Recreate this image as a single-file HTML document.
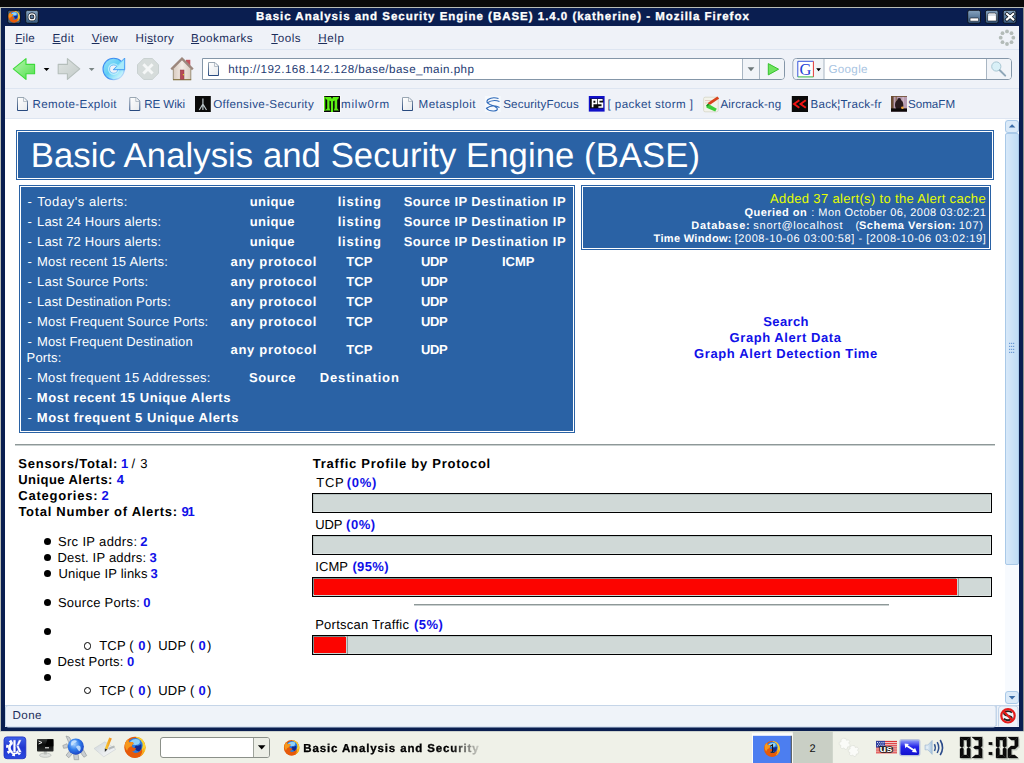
<!DOCTYPE html>
<html>
<head>
<meta charset="utf-8">
<title>Basic Analysis and Security Engine (BASE) 1.4.0 (katherine) - Mozilla Firefox</title>
<style>
*{box-sizing:border-box;margin:0;padding:0}
html,body{width:1024px;height:763px;overflow:hidden;background:#0a0a0a;font-family:"Liberation Sans",sans-serif}
.a{position:absolute;white-space:pre;text-rendering:geometricPrecision}
svg{position:absolute;overflow:visible}
u{text-decoration:underline;text-underline-offset:1px}
#win{left:0;top:7px;width:1024px;height:724px;background:#0a1e50;border-left:1px solid #b9bdb6;border-top:1px solid #b9bdb6;border-right:1px solid #8f948f}
#menubar{left:5px;top:26px;width:1014px;height:24px;background:#eff2f8;border-bottom:1px solid #dde5f1}
#toolbar{left:5px;top:50px;width:1014px;height:39px;background:#eff2f8;border-bottom:1px solid #dde5f1}
#bmbar{left:5px;top:89px;width:1014px;height:30px;background:#eff2f8;border-bottom:1px solid #dde5f1}
#content{left:5px;top:119px;width:1000px;height:586px;background:#fff}
#sbar{left:1005px;top:119px;width:14px;height:586px;background:#f7fafe}
#status{left:5px;top:705px;width:1014px;height:22px;background:#eef2f9;border-top:1px solid #c3d5ea}
#task{left:0;top:731px;width:1024px;height:32px;background:#eff1e8;border-top:1px solid #cdd3cf}
.box{border:1px solid #2a62a5;padding:1px;background:#fff}
.box>i{display:block;width:100%;height:100%;background:#2a62a5}
.hr{height:2px;background:#8e9898;border-bottom:1px solid #c9d0d0}
.bar{left:312px;width:680px;height:20px;background:#d0d9d7;border:1px solid #000;box-shadow:inset 1px 1px 0 #b4c0be,inset -1px -1px 0 #dde4e3}
.bar>i{position:absolute;left:1px;top:1px;height:16px;background:#fc0400;box-shadow:-1px -1px 0 #7b8c8a,1px 1px 0 #c9d2d0}
.bar>b{position:absolute;top:0;width:1px;height:18px;background:#8d9a98}
.dot{width:7px;height:7px;border-radius:50%;background:#000;left:43.9px}
.circ{width:7.4px;height:7.4px;border-radius:50%;border:1.1px solid #000;left:83.8px}
.fade{-webkit-mask-image:linear-gradient(90deg,#000 0,#000 148px,rgba(0,0,0,0.08) 178px);mask-image:linear-gradient(90deg,#000 0,#000 148px,rgba(0,0,0,0.08) 178px)}
</style>
</head>
<body>
<div id="win" class="a"></div>
<div id="menubar" class="a"></div>
<div id="toolbar" class="a"></div>
<div id="bmbar" class="a"></div>
<div id="content" class="a"></div>
<div id="sbar" class="a"></div>
<div id="status" class="a"></div>
<div id="task" class="a"></div>
<div class="a box" style="left:16px;top:130px;width:978px;height:50px"><i></i></div>
<div class="a box" style="left:19px;top:185px;width:556px;height:248px"><i></i></div>
<div class="a box" style="left:581px;top:185px;width:410px;height:65px"><i></i></div>
<div class="a hr" style="left:15px;top:444px;width:980px"></div>
<div class="a hr" style="left:414px;top:604px;width:475px"></div>
<div class="a bar" style="top:493px"></div>
<div class="a bar" style="top:535px"></div>
<div class="a bar" style="top:577px"><i style="width:643px"></i><b style="left:645px"></b></div>
<div class="a bar" style="top:635px"><i style="width:32px"></i><b style="left:34px"></b></div>
<div class="a dot" style="top:538.25px"></div>
<div class="a dot" style="top:554.00px"></div>
<div class="a dot" style="top:569.75px"></div>
<div class="a dot" style="top:599.00px"></div>
<div class="a dot" style="top:628.25px"></div>
<div class="a dot" style="top:657.90px"></div>
<div class="a dot" style="top:673.70px"></div>
<div class="a circ" style="top:642.20px"></div>
<div class="a circ" style="top:686.70px"></div>

<svg width="1024" height="763" viewBox="0 0 1024 763" style="left:0;top:0">
<defs>
<linearGradient id="gbtn" x1="0" y1="0" x2="0" y2="1"><stop offset="0" stop-color="#86a3bf"/><stop offset="1" stop-color="#36587c"/></linearGradient>
<linearGradient id="gback" x1="0" y1="0" x2="1" y2="1"><stop offset="0" stop-color="#b9f5b0"/><stop offset="1" stop-color="#4fe04c"/></linearGradient>
<linearGradient id="gfwd" x1="0" y1="0" x2="1" y2="1"><stop offset="0" stop-color="#dfe4e2"/><stop offset="1" stop-color="#c3cbc9"/></linearGradient>
<linearGradient id="gpg" x1="0" y1="0" x2="0" y2="1"><stop offset="0" stop-color="#9aa7b3"/><stop offset="1" stop-color="#27497f"/></linearGradient>
<linearGradient id="gpgf" x1="0" y1="0" x2="1" y2="1"><stop offset="0" stop-color="#ffffff"/><stop offset="1" stop-color="#e6e9ec"/></linearGradient>
<linearGradient id="gthumb" x1="0" y1="0" x2="1" y2="0"><stop offset="0" stop-color="#d9e9f9"/><stop offset="1" stop-color="#bfdcf5"/></linearGradient>
<radialGradient id="grel" cx="0.5" cy="0.5" r="0.5"><stop offset="0.35" stop-color="#d8f4fd"/><stop offset="0.8" stop-color="#6fd0f7"/><stop offset="1" stop-color="#3a9df2"/></radialGradient>
<linearGradient id="ghome" x1="0" y1="0" x2="1" y2="0"><stop offset="0" stop-color="#d9cbc0"/><stop offset="0.5" stop-color="#f3ece6"/><stop offset="1" stop-color="#d9cbc0"/></linearGradient>
<linearGradient id="grel2" gradientUnits="userSpaceOnUse" x1="106" y1="60" x2="123" y2="78"><stop offset="0" stop-color="#8fdff8"/><stop offset="0.45" stop-color="#5fcdf5"/><stop offset="0.8" stop-color="#b5eefb"/><stop offset="1" stop-color="#e6f8fd"/></linearGradient>
<linearGradient id="grel3" gradientUnits="userSpaceOnUse" x1="106" y1="60" x2="123" y2="78"><stop offset="0" stop-color="#3f8ff2"/><stop offset="0.6" stop-color="#3f8ff2"/><stop offset="1" stop-color="#d5effb"/></linearGradient>
<g id="pgicon"><path d="M0.5,0.5 H7 L10.5,4 V13.5 H0.5 Z" fill="url(#gpgf)" stroke="url(#gpg)" stroke-width="1"/><path d="M6.5,1 V4.5 H10" fill="none" stroke="#a9b4be" stroke-width="0.8"/></g>
<g id="ffx"><circle cx="8" cy="8" r="7.9" fill="#e55b0a"/><path d="M8.4,0.15 A7.85,7.85 0 0 1 12.6,14.4 Q14.2,10.4 12.8,6.4 Q11.6,2.6 8.4,0.15z" fill="#fbd12e"/><circle cx="8.2" cy="6.6" r="5.6" fill="#2d7ee0"/><path d="M4.6,3.4 Q7.6,0.9 11.2,2.4 Q12.4,4.4 10.8,5.8 Q8,6.8 5.6,5.6 Q4.2,4.8 4.6,3.4z" fill="#8fd2f8"/><path d="M8.8,6.6 Q11.2,7.2 12.6,5.6 Q13.8,9 11,11.2 Q8.8,10.6 7.8,9 Q7.6,7.4 8.8,6.6z" fill="#132a90"/><path d="M0.7,5 Q1.4,2.8 3.2,2 Q3,3.6 3.9,4.4 Q5.8,3.6 7.2,5 Q5.8,5.6 5.6,7.2 Q6.6,9 8.8,8.4 Q8.4,11 5.8,11.2 Q8.6,13.4 12.4,11.6 Q14,10.6 14.9,8.6 Q15.4,12.6 11.6,15 Q7.2,17 3.4,14.2 Q-0.4,10.6 0.7,5z" fill="#e65a0a"/><path d="M14.9,8.6 Q15.4,12.6 11.6,15 Q13.8,12.4 13.4,10.2 Q14.4,9.6 14.9,8.6z" fill="#f7b322"/><path d="M0.7,5 Q1.4,2.8 3.2,2 Q3,3.6 3.9,4.4 Q5.8,3.6 7.2,5 Q5.8,5.6 5.6,7.2 Q2.8,7.8 2.2,10.6 Q0.2,8.4 0.7,5z" fill="#f6981c"/></g>
</defs>
<!-- titlebar icons -->
<rect x="7.7" y="10.3" width="12.6" height="13" rx="1.8" fill="#44617f" stroke="#0a0f18" stroke-width="0.9"/>
<use href="#ffx" transform="translate(8.3,11) scale(0.72)"/>
<rect x="25.7" y="10.3" width="12.6" height="13" rx="1.8" fill="url(#gbtn)" stroke="#0a0f18" stroke-width="0.9"/>
<circle cx="32" cy="16.9" r="3" fill="none" stroke="#0a0f18" stroke-width="2.6"/>
<circle cx="32" cy="16.9" r="3" fill="none" stroke="#fff" stroke-width="1.3"/>
<!-- window buttons -->
<rect x="967.7" y="10.3" width="12.8" height="13" rx="1.8" fill="url(#gbtn)" stroke="#0a0f18" stroke-width="0.9"/>
<rect x="970" y="18" width="8.6" height="3.2" rx="0.8" fill="#fff" stroke="#0a0f18" stroke-width="0.6"/>
<rect x="985.4" y="10.3" width="12.8" height="13" rx="1.8" fill="url(#gbtn)" stroke="#0a0f18" stroke-width="0.9"/>
<path d="M987.6,21 V14.6 q0,-1.6 1.6,-1.6 h5.6 q1.6,0 1.6,1.6 V21z" fill="#fff" stroke="#0a0f18" stroke-width="0.6"/>
<path d="M988,15 h8.2" stroke="#9fb1c4" stroke-width="0.8"/>
<rect x="1003.2" y="10.3" width="12.8" height="13" rx="1.8" fill="url(#gbtn)" stroke="#0a0f18" stroke-width="0.9"/>
<path d="M1007,14 l6.2,5.4 M1013.2,14 l-6.2,5.4" stroke="#0a0f18" stroke-width="3.6" stroke-linecap="square"/>
<path d="M1007,14 l6.2,5.4 M1013.2,14 l-6.2,5.4" stroke="#fff" stroke-width="2.2" stroke-linecap="square"/>
<!-- throbber -->
<g fill="#b3bbb8"><circle cx="1013.3" cy="37.7" r="1.9"/><circle cx="1011.5" cy="42.2" r="1.9"/><circle cx="1007.0" cy="44.0" r="1.9"/><circle cx="1002.5" cy="42.2" r="1.9"/><circle cx="1000.7" cy="37.7" r="1.9"/><circle cx="1002.5" cy="33.2" r="1.9"/><circle cx="1007.0" cy="31.4" r="1.9"/><circle cx="1011.5" cy="33.2" r="1.9"/></g>
<!-- back -->
<path d="M13.3,68.9 L26,58.6 V64.4 H34.6 V73.7 H26 V79.4 Z" fill="url(#gback)" stroke="#3ddb3a" stroke-width="1.1" stroke-linejoin="round"/>
<path d="M43.7,68 h5.7 l-2.85,3.1z" fill="#000"/>
<!-- forward -->
<path d="M79.8,68.9 L67.4,58.6 V64.4 H58.2 V73.7 H67.4 V79.4 Z" fill="url(#gfwd)" stroke="#b5bebb" stroke-width="1.1" stroke-linejoin="round"/>
<path d="M88.8,68 h5.7 l-2.85,3.1z" fill="#7b8685"/>
<!-- reload -->
<path fill-rule="evenodd" d="M113.7,58.3 a10.7,10.7 0 1 0 0.01,0z M113.7,65.0 a4.1,4.1 0 1 1 -0.01,0z" fill="url(#grel2)"/>
<circle cx="113.7" cy="69" r="10.7" fill="none" stroke="url(#grel3)" stroke-width="1.1"/>
<circle cx="113.7" cy="69.1" r="4.1" fill="none" stroke="#58aef6" stroke-width="0.7"/>
<circle cx="113.7" cy="69.1" r="5.2" fill="none" stroke="#c9f2fc" stroke-width="1.3" opacity="0.8"/>
<path d="M124.7,58 V69.7 H113.2 Z" fill="#86def8"/>
<path d="M123.9,60.2 V69 H115.2 Z" fill="#a9eafa"/>
<path d="M121.4,61.3 L124.7,58 V69.7 H113.2 L116.6,66.3" fill="none" stroke="#3f96f3" stroke-width="0.9" stroke-linejoin="round"/>
<!-- stop -->
<path d="M143.7,58.5 h8.6 l6.2,6.2 v8.6 l-6.2,6.2 h-8.6 l-6.2,-6.2 v-8.6z" fill="#d6dcdb" stroke="#c3cbca" stroke-width="0.8"/>
<path d="M143.4,64.3 l9.2,9.2 M152.6,64.3 l-9.2,9.2" stroke="#f5f7f7" stroke-width="3"/>
<!-- home -->
<rect x="186" y="59.8" width="4.3" height="7" fill="#c4525c"/>
<path d="M173.3,67 L182,58.8 L190.8,67 V79.6 H173.3Z" fill="url(#ghome)"/>
<path d="M173.3,79.6 V69 M190.8,69 V79.6" stroke="#8a7d62" stroke-width="0.8" fill="none"/>
<path d="M173,79.7 H191.2" stroke="#7b6a35" stroke-width="1.1"/>
<path d="M171.3,69.3 L182,58.6 L192.8,69.3" fill="none" stroke="#9c877d" stroke-width="2.4" stroke-linejoin="miter"/>
<rect x="180.2" y="70" width="3.8" height="9.3" fill="#b54a57" stroke="#8c3a45" stroke-width="0.5"/>
<circle cx="183.4" cy="74.7" r="0.6" fill="#e8f020"/>
<!-- url box -->
<path d="M202.5,58.5 H781 q3.5,0 3.5,3.5 V76 q0,3.5 -3.5,3.5 H202.5Z" fill="#fff" stroke="#8496a8" stroke-width="1"/>
<path d="M742.5,59 H781 q3,0 3,3 V76 q0,3 -3,3 H742.5Z" fill="#f1f4f8"/>
<path d="M742.5,59 V79 M759.5,59 V79" stroke="#a9b6c3" stroke-width="1"/>
<path d="M747.6,67.3 h6.8 l-3.4,4z" fill="#6d787a"/>
<path d="M768.3,63.6 L778.6,69.2 L768.3,74.9Z" fill="#6fe35f" stroke="#35c22e" stroke-width="1" stroke-linejoin="round"/>
<use href="#pgicon" transform="translate(208,62)"/>
<!-- search box -->
<path d="M796.5,58.5 H1008 q3.5,0 3.5,3.5 V76 q0,3.5 -3.5,3.5 H796.5 q-3.5,0 -3.5,-3.5 V62 q0,-3.5 3.5,-3.5Z" fill="#fff" stroke="#8496a8" stroke-width="1"/>
<path d="M796.5,59 H824 V79 H796.5 q-3,0 -3,-3 V62 q0,-3 3,-3Z" fill="#f1f4f8"/>
<path d="M986.5,59 H1008 q3,0 3,3 V76 q0,3 -3,3 H986.5Z" fill="#f1f4f8"/>
<path d="M824,59 V79 M986.5,59 V79" stroke="#a9b6c3" stroke-width="1"/>
<rect x="797.8" y="61.3" width="15.6" height="15.6" fill="#fff"/>
<path d="M797.8,76.9 V61.3 H813.4" fill="none" stroke="#2244d8" stroke-width="0.9"/>
<path d="M813.4,61.3 V76.9" fill="none" stroke="#e02020" stroke-width="0.9"/>
<path d="M797.8,76.9 H813.4" fill="none" stroke="#20b030" stroke-width="0.9"/>
<text x="799.6" y="75" font-family="Liberation Serif" font-size="16.5" fill="#1f3fd6">G</text>
<path d="M816.2,68.3 h4.8 l-2.4,2.9z" fill="#000"/>
<!-- magnifier -->
<circle cx="996.3" cy="66.5" r="4.6" fill="#d9f0f7" stroke="#a9c7d3" stroke-width="1"/>
<path d="M999.8,70.3 L1005.2,75.6" stroke="#8fa7b8" stroke-width="2" stroke-linecap="round"/>
<!-- bookmark icons -->
<use href="#pgicon" transform="translate(17,97)"/>
<use href="#pgicon" transform="translate(129.3,97)"/>
<use href="#pgicon" transform="translate(402,97)"/>
<!-- offensive security -->
<rect x="195" y="96" width="15.8" height="16" fill="#0a0a0a"/>
<path d="M202.9,98.5 v7 M202.9,104 l-3.6,6 M202.9,104 l3.6,6 M202.9,105 v5" stroke="#b8c4c8" stroke-width="1.2" fill="none"/>
<!-- milw0rm -->
<rect x="323.4" y="95.4" width="17.2" height="17.2" fill="#fff"/>
<rect x="324" y="96" width="16" height="16" fill="#060309"/>
<g fill="#5cf014"><rect x="324" y="96.6" width="1.3" height="14.2"/><polygon points="325,97 331,97 332,99 333,97 339,97 338.2,99.2 336.6,99.8 333.2,101.2 330.8,101.2 327.4,99.8 325.8,99.2"/><rect x="327.2" y="98" width="2.3" height="11.5"/><rect x="330.9" y="99" width="2.2" height="13"/><rect x="334.6" y="98" width="2.6" height="11.5"/><polygon points="325,110.6 327.2,108.4 329.5,108.4 330.4,110.6"/><polygon points="333.8,110.6 334.6,108.4 337.2,108.4 339,110.6"/></g>
<!-- securityfocus -->
<rect x="484.8" y="96" width="16" height="16" fill="#f6f9fd"/>
<path d="M498.5,98.5 q-6,-2 -10.5,1 q-3,3 2,5 q5,1.5 7,3.5 q1.5,2.5 -3,3 q-5,0.3 -7.5,-2.5 M487,103 q6,-4 12.5,-1.5 M486,108.5 q7,-5 13.5,-1" fill="none" stroke="#2d68b8" stroke-width="1.1"/>
<!-- packet storm -->
<rect x="588.8" y="96" width="15.8" height="15.6" fill="#1010c8"/>
<rect x="590" y="98.6" width="13.2" height="9.8" fill="#0a0a0a"/>
<path d="M592.6,107.2 V99.9 H596.2 V103.5 H592.6 M602.6,99.9 H598.6 V103.4 H602.4 V107 H598.4" fill="none" stroke="#fff" stroke-width="1.7" stroke-linejoin="miter"/>
<!-- aircrack -->
<rect x="703.6" y="97.2" width="14.6" height="14.6" rx="1.5" fill="#f3f3ea" stroke="#d5d6c6" stroke-width="0.8"/>
<path d="M705,100.5 h9 M705,103 h6" stroke="#e3b9b0" stroke-width="0.7"/>
<polygon points="717.4,96.6 719.2,98.6 710.4,104.6 707.4,105 708.4,102.6" fill="#d8431c"/>
<polygon points="706.2,105.6 708,103.8 716.8,108.8 715.2,111.6 706.6,107.8" fill="#3ccf38"/>
<polygon points="706.2,105.6 708,103.8 709.4,104.6 707.4,106.6" fill="#1f8a22"/>
<!-- backtrack -->
<rect x="791.8" y="96" width="16.2" height="16" fill="#0a0a0a"/>
<path d="M799.3,100.2 l-5.2,3.8 l5.2,3.8 M805.8,100.2 l-5.2,3.8 l5.2,3.8" fill="none" stroke="#f01414" stroke-width="2"/>
<!-- somafm -->
<rect x="891" y="96.1" width="16" height="15.6" fill="#b89cb2"/>
<rect x="891" y="96.1" width="2.6" height="13" fill="#6b4c34"/><rect x="895.6" y="96.1" width="1.2" height="9" fill="#8a6a52"/><rect x="902.6" y="96.1" width="1" height="9" fill="#d9c4d0"/><rect x="891" y="96.1" width="16" height="0.8" fill="#6a4a2a"/>
<ellipse cx="899.2" cy="105" rx="4.2" ry="5.6" fill="#2a1a1e"/><circle cx="899.2" cy="100" r="1.9" fill="#2a1a1e"/>
<rect x="891" y="108.4" width="16" height="3.3" fill="#0c0808"/>
<circle cx="902.4" cy="107.7" r="1.3" fill="#f2a838"/>
<!-- scrollbar -->
<rect x="1005.5" y="120.5" width="13" height="12" rx="2.5" fill="#dbeaf8" stroke="#a9c9e8" stroke-width="1"/>
<path d="M1008.8,127.6 h6.6 l-3.3,-3.4z" fill="#3d6ea8"/>
<rect x="1005.5" y="133.5" width="13" height="431" rx="1.5" fill="url(#gthumb)" stroke="#a9c9e8" stroke-width="1"/>
<g fill="#6c9bd6"><rect x="1009" y="342.8" width="1.2" height="1.2"/><rect x="1011" y="342.8" width="1.2" height="1.2"/><rect x="1013" y="342.8" width="1.2" height="1.2"/><rect x="1009" y="345.8" width="1.2" height="1.2"/><rect x="1011" y="345.8" width="1.2" height="1.2"/><rect x="1013" y="345.8" width="1.2" height="1.2"/><rect x="1009" y="348.8" width="1.2" height="1.2"/><rect x="1011" y="348.8" width="1.2" height="1.2"/><rect x="1013" y="348.8" width="1.2" height="1.2"/><rect x="1009" y="351.8" width="1.2" height="1.2"/><rect x="1011" y="351.8" width="1.2" height="1.2"/><rect x="1013" y="351.8" width="1.2" height="1.2"/></g>
<rect x="1005.5" y="691.5" width="13" height="12" rx="2.5" fill="#dbeaf8" stroke="#a9c9e8" stroke-width="1"/>
<path d="M1008.8,696 h6.6 l-3.3,3.4z" fill="#3d6ea8"/>
<!-- status bar right panel -->
<rect x="5.5" y="705.5" width="990.5" height="21.5" rx="2.5" fill="#eff3f9" stroke="#c5d5e8" stroke-width="1"/>
<path d="M996.5,706 V726" stroke="#c3d5ea" stroke-width="1"/>
<path d="M998.5,726.5 V709 q0,-3 3,-3 H1015 q3,0 3,3 V726.5" fill="#eef2f9" stroke="#c3d5ea" stroke-width="1"/>
<path d="M1012,712.6 q-3.8,-2.8 -7.6,-0.2 q-1.4,2.2 3.4,3.2 q5,1 3.8,3.4 q-3.6,2.6 -7.8,-0.2" fill="none" stroke="#222" stroke-width="1.9"/>
<circle cx="1008" cy="715.8" r="6.7" fill="none" stroke="#e31b1b" stroke-width="2.2"/>
<path d="M1003.2,711 L1012.8,720.6" stroke="#e31b1b" stroke-width="2.2"/>
</svg>

<svg width="1024" height="32" viewBox="0 731 1024 32" style="left:0;top:731px">
<defs>
<linearGradient id="gk" x1="0" y1="0" x2="0" y2="1"><stop offset="0" stop-color="#3f63ea"/><stop offset="0.5" stop-color="#2136cf"/><stop offset="1" stop-color="#2a4ae0"/></linearGradient>
<linearGradient id="gmon" x1="0" y1="0" x2="0" y2="1"><stop offset="0" stop-color="#3a3d3c"/><stop offset="0.45" stop-color="#0b0c0c"/><stop offset="1" stop-color="#2a2c2b"/></linearGradient>
<radialGradient id="gglobe" cx="0.4" cy="0.35" r="0.7"><stop offset="0" stop-color="#a9d4ff"/><stop offset="0.5" stop-color="#2f7bea"/><stop offset="1" stop-color="#1a3fc0"/></radialGradient>
<linearGradient id="gpaper" x1="0" y1="0" x2="1" y2="1"><stop offset="0" stop-color="#cfd6da"/><stop offset="1" stop-color="#fbfcfc"/></linearGradient>
<linearGradient id="gpen" x1="0" y1="0" x2="1" y2="0"><stop offset="0" stop-color="#f7d23a"/><stop offset="1" stop-color="#f08a18"/></linearGradient>
<radialGradient id="gspk" cx="0.3" cy="0.5" r="0.8"><stop offset="0" stop-color="#e8f1f8"/><stop offset="1" stop-color="#9dbcd8"/></radialGradient>
<linearGradient id="gnet" x1="0" y1="0" x2="0" y2="1"><stop offset="0" stop-color="#9aa8f8"/><stop offset="0.45" stop-color="#2525ea"/><stop offset="1" stop-color="#1010cc"/></linearGradient>
</defs>
<!-- K menu -->
<rect x="4" y="736.9" width="21.8" height="21.8" rx="3" fill="url(#gk)" stroke="#1a2cc0" stroke-width="0.8"/>
<path d="M13.25,742.68 A5.2,5.2 0 1 0 18.86,750.68" fill="none" stroke="#fff" stroke-width="2.6"/>
<path d="M11.87,740.93 A7.3,7.3 0 1 0 20.02,752.58" fill="none" stroke="#fff" stroke-width="2.6" stroke-dasharray="2.7 3.2"/>
<g fill="#fff" stroke="#2338d2" stroke-width="0.5"><path d="M13.1,739.8 h2.8 v12.7 h-2.8z"/><path d="M15.9,746.6 L18.7,739.8 H21.7 L18.3,747 Z"/><path d="M16.4,746.4 L18.4,745 L21.9,752.5 H18.9 Z"/></g>
<!-- terminal -->
<ellipse cx="45.3" cy="755.2" rx="5.8" ry="2.1" fill="#dfe2de" stroke="#b5b9b4" stroke-width="0.7"/>
<rect x="43.8" y="750.5" width="3" height="4" fill="#b9bdb8"/>
<rect x="37" y="738.9" width="16.5" height="12.6" rx="0.8" fill="url(#gmon)"/>
<path d="M47.5,739.2 h5.8 v7 h-8.2z" fill="#020202"/>
<path d="M38.6,741 l3.4,1.5 l-3.4,1.5" stroke="#e8e8e8" stroke-width="1" fill="none"/>
<path d="M45,747.8 h4" stroke="#e8e8e8" stroke-width="1.1"/>
<!-- konqueror -->
<g fill="#c9ced1" stroke="#8d9396" stroke-width="0.6">
<path d="M66,736 l3.2,1 l3,5 l-3,1.6z"/><path d="M62.8,745.5 l4.2,-1.8 l1.2,4 l-4.6,0.6z"/><path d="M66,755.2 l3.6,-4.4 l3,2.6 l-3.8,4.4z"/><path d="M73.6,754.5 h4.6 l0.6,5.2 h-4.6z"/><path d="M80.5,752.6 l3,-2.6 l3.2,5.6 l-2.8,1.6z"/>
</g>
<circle cx="75.8" cy="746.6" r="8.1" fill="url(#gglobe)"/>
<path d="M71.5,741.5 q3,-2.2 5.5,-0.5 q-1,2 -3,2.2 q-0.5,2 -2.5,2.5 q-1.2,-2 0,-4.2z M76.5,746 q2.5,-1.2 4,0.8 q0.8,2.4 -0.8,4.4 q-2,-0.4 -2.4,-2.4 q-1.8,-1 -0.8,-2.8z" fill="#cfe8ff" opacity="0.85"/>
<!-- kate/pencil -->
<path d="M94,748.5 L104.8,741.8 L115.8,749.2 L103.8,756.8Z" fill="url(#gpaper)" stroke="#c3c9cc" stroke-width="0.5"/>
<path d="M109.2,737.4 l2.6,1 l-4.4,11.2 l-2.6,-1z" fill="url(#gpen)"/>
<path d="M104.8,748.6 l2.6,1 l-2.6,2.4z" fill="#2a2a2a"/>
<path d="M108,748 l6,-2.4 l1.2,1.6 l-6,2.6z" fill="#9da5a8" opacity="0.7"/>
<!-- firefox -->
<use href="#ffx" transform="translate(124.2,736.6) scale(1.34)"/>
<!-- run box -->
<rect x="160.5" y="737.5" width="109" height="20" rx="2.5" fill="#fff" stroke="#8b9089" stroke-width="1"/>
<path d="M253.5,738 H267 q2,0 2,2 V755 q0,2 -2,2 H253.5Z" fill="#eceee6"/>
<path d="M253.5,738 V757" stroke="#9fa49c" stroke-width="1"/>
<path d="M257.9,745.2 h7.6 l-3.8,4.2z" fill="#000"/>
<!-- task firefox icon -->
<use href="#ffx" transform="translate(283.8,740) scale(0.98)"/>
<!-- pager -->
<rect x="792.8" y="731" width="40" height="32" fill="#c9cfc5"/>
<rect x="752" y="733.2" width="40.8" height="29.8" fill="#fdfdfb"/>
<rect x="753" y="735.8" width="38.4" height="27.2" fill="#4c7ef0"/>
<path d="M791.3,735.8 V763" stroke="#4a4d48" stroke-width="1"/>
<use href="#ffx" transform="translate(764,740.8) scale(1)"/>
<path d="M770.3,746.4 l2.2,-1.6 v7.4 M770.6,752.2 h4" stroke="#1a1a1a" stroke-width="1.1" fill="none"/>
<!-- gears faded -->
<g fill="#fafbf8" stroke="#dfe2db" stroke-width="0.8">
<path d="M843.5,738.2 l2.4,0.3 l0.6,1.8 l1.9,-0.6 l1.4,1.8 l-1.1,1.7 l1.5,1.3 l-0.6,2.2 l-2,0.2 l-0.3,2 l-2.2,0.6 l-1.2,-1.6 l-1.8,0.9 l-1.7,-1.4 l0.6,-1.9 l-1.8,-0.9 l0,-2.3 l1.9,-0.6 l-0.3,-2 l1.9,-1.2z"/>
<path d="M852.5,745.5 l2.2,0.2 l0.6,1.8 l1.9,-0.5 l1.3,1.7 l-1,1.7 l1.4,1.3 l-0.6,2.1 l-1.9,0.2 l-0.3,2 l-2.1,0.6 l-1.2,-1.6 l-1.8,0.9 l-1.6,-1.4 l0.6,-1.9 l-1.7,-0.9 l0,-2.2 l1.8,-0.6 l-0.3,-1.9 l1.8,-1.2z"/>
</g>
<!-- flag -->
<rect x="876" y="740.9" width="21" height="13.3" fill="#f7f3ee"/>
<g fill="#d9292c"><rect x="876" y="740.90" width="21" height="1.05"/><rect x="876" y="742.80" width="21" height="1.05"/><rect x="876" y="744.70" width="21" height="1.05"/><rect x="876" y="746.60" width="21" height="1.05"/><rect x="876" y="748.50" width="21" height="1.05"/><rect x="876" y="750.40" width="21" height="1.05"/><rect x="876" y="752.30" width="21" height="1.05"/></g>
<rect x="876" y="740.9" width="9" height="6.6" fill="#2f3f9e"/>
<g fill="#dfe4f5"><rect x="877" y="742" width="1" height="1"/><rect x="879.2" y="742" width="1" height="1"/><rect x="881.4" y="742" width="1" height="1"/><rect x="883.4" y="742" width="1" height="1"/><rect x="878.1" y="743.6" width="1" height="1"/><rect x="880.3" y="743.6" width="1" height="1"/><rect x="882.5" y="743.6" width="1" height="1"/><rect x="877" y="745.2" width="1" height="1"/><rect x="879.2" y="745.2" width="1" height="1"/><rect x="881.4" y="745.2" width="1" height="1"/><rect x="883.4" y="745.2" width="1" height="1"/></g>
<text x="879.4" y="752.4" font-family="Liberation Sans" font-weight="bold" font-size="9.5" fill="#fff" stroke="#151515" stroke-width="1.7" paint-order="stroke" textLength="13" lengthAdjust="spacingAndGlyphs">us</text>
<!-- network -->
<rect x="899.8" y="739.6" width="20" height="16" rx="2" fill="url(#gnet)" stroke="#b9c3dd" stroke-width="1.3"/>
<path d="M904.6,743.4 l4.4,0.5 l-1.3,1.3 l6.3,4 l1,-1.5 l2,4.8 l-5.2,-0.4 l1.1,-1.4 l-6.3,-4 l-1.3,1.5z" fill="#fff"/>
<!-- speaker -->
<path d="M925,745 h2.8 l4.4,-4.6 v14 l-4.4,-4.6 h-2.8z" fill="url(#gspk)" stroke="#9db7d2" stroke-width="0.6"/>
<path d="M934.4,744.2 q1.8,3.4 0,6.8" fill="none" stroke="#33558f" stroke-width="1.5"/>
<path d="M937.2,742.2 q3,5.4 0,10.8" fill="none" stroke="#2f5090" stroke-width="1.5"/>
<path d="M940.2,740 q4.6,7.6 0,15.2" fill="none" stroke="#2a4a8a" stroke-width="1.6"/>
<!-- clock -->
<g fill="#c6ccc3" transform="translate(1.4,1.4)"><polygon points="960.00,737.00 970.40,737.00 966.90,740.10 963.50,740.10"/><polygon points="970.40,737.00 966.90,740.10 966.90,746.30 968.35,747.40 970.40,746.30"/><polygon points="970.40,758.00 966.90,754.90 966.90,748.70 968.35,747.60 970.40,748.70"/><polygon points="960.00,758.00 970.40,758.00 966.90,754.90 963.50,754.90"/><polygon points="960.00,758.00 963.50,754.90 963.50,748.70 962.05,747.60 960.00,748.70"/><polygon points="960.00,737.00 963.50,740.10 963.50,746.30 962.05,747.40 960.00,746.30"/><polygon points="971.80,737.00 982.20,737.00 978.70,740.10 975.30,740.10"/><polygon points="982.20,737.00 978.70,740.10 978.70,746.30 980.15,747.40 982.20,746.30"/><polygon points="973.35,747.50 974.90,745.95 979.10,745.95 980.65,747.50 979.10,749.05 974.90,749.05"/><polygon points="982.20,758.00 978.70,754.90 978.70,748.70 980.15,747.60 982.20,748.70"/><polygon points="971.80,758.00 982.20,758.00 978.70,754.90 975.30,754.90"/><polygon points="996.00,737.00 1006.40,737.00 1002.90,740.10 999.50,740.10"/><polygon points="1006.40,737.00 1002.90,740.10 1002.90,746.30 1004.35,747.40 1006.40,746.30"/><polygon points="1006.40,758.00 1002.90,754.90 1002.90,748.70 1004.35,747.60 1006.40,748.70"/><polygon points="996.00,758.00 1006.40,758.00 1002.90,754.90 999.50,754.90"/><polygon points="996.00,758.00 999.50,754.90 999.50,748.70 998.05,747.60 996.00,748.70"/><polygon points="996.00,737.00 999.50,740.10 999.50,746.30 998.05,747.40 996.00,746.30"/><polygon points="1007.80,737.00 1018.20,737.00 1014.70,740.10 1011.30,740.10"/><polygon points="1018.20,737.00 1014.70,740.10 1014.70,746.30 1016.15,747.40 1018.20,746.30"/><polygon points="1009.35,747.50 1010.90,745.95 1015.10,745.95 1016.65,747.50 1015.10,749.05 1010.90,749.05"/><polygon points="1007.80,758.00 1011.30,754.90 1011.30,748.70 1009.85,747.60 1007.80,748.70"/><polygon points="1007.80,758.00 1018.20,758.00 1014.70,754.90 1011.30,754.90"/><rect x="988.9" y="742.2" width="3.2" height="2.7"/><rect x="988.9" y="752.1" width="3.2" height="2.8"/></g>
<g fill="#0b0b0b" stroke="#0b0b0b" stroke-width="0.3"><polygon points="960.00,737.00 970.40,737.00 966.90,740.10 963.50,740.10"/><polygon points="970.40,737.00 966.90,740.10 966.90,746.30 968.35,747.40 970.40,746.30"/><polygon points="970.40,758.00 966.90,754.90 966.90,748.70 968.35,747.60 970.40,748.70"/><polygon points="960.00,758.00 970.40,758.00 966.90,754.90 963.50,754.90"/><polygon points="960.00,758.00 963.50,754.90 963.50,748.70 962.05,747.60 960.00,748.70"/><polygon points="960.00,737.00 963.50,740.10 963.50,746.30 962.05,747.40 960.00,746.30"/><polygon points="971.80,737.00 982.20,737.00 978.70,740.10 975.30,740.10"/><polygon points="982.20,737.00 978.70,740.10 978.70,746.30 980.15,747.40 982.20,746.30"/><polygon points="973.35,747.50 974.90,745.95 979.10,745.95 980.65,747.50 979.10,749.05 974.90,749.05"/><polygon points="982.20,758.00 978.70,754.90 978.70,748.70 980.15,747.60 982.20,748.70"/><polygon points="971.80,758.00 982.20,758.00 978.70,754.90 975.30,754.90"/><polygon points="996.00,737.00 1006.40,737.00 1002.90,740.10 999.50,740.10"/><polygon points="1006.40,737.00 1002.90,740.10 1002.90,746.30 1004.35,747.40 1006.40,746.30"/><polygon points="1006.40,758.00 1002.90,754.90 1002.90,748.70 1004.35,747.60 1006.40,748.70"/><polygon points="996.00,758.00 1006.40,758.00 1002.90,754.90 999.50,754.90"/><polygon points="996.00,758.00 999.50,754.90 999.50,748.70 998.05,747.60 996.00,748.70"/><polygon points="996.00,737.00 999.50,740.10 999.50,746.30 998.05,747.40 996.00,746.30"/><polygon points="1007.80,737.00 1018.20,737.00 1014.70,740.10 1011.30,740.10"/><polygon points="1018.20,737.00 1014.70,740.10 1014.70,746.30 1016.15,747.40 1018.20,746.30"/><polygon points="1009.35,747.50 1010.90,745.95 1015.10,745.95 1016.65,747.50 1015.10,749.05 1010.90,749.05"/><polygon points="1007.80,758.00 1011.30,754.90 1011.30,748.70 1009.85,747.60 1007.80,748.70"/><polygon points="1007.80,758.00 1018.20,758.00 1014.70,754.90 1011.30,754.90"/><rect x="988.9" y="742.2" width="3.2" height="2.7"/><rect x="988.9" y="752.1" width="3.2" height="2.8"/></g>
</svg>

<div class="a " style="left:256.00px;top:10.00px;font-size:11.5px;line-height:15px;letter-spacing:0.982px;color:#fff;font-weight:bold;-webkit-text-stroke:0.3px #fff;">Basic Analysis and Security Engine (BASE) 1.4.0 (katherine) - Mozilla Firefox</div>
<div class="a " style="left:15.20px;top:31.00px;font-size:11.6px;line-height:15px;letter-spacing:0.267px;color:#1b2d5b;"><u>F</u>ile</div>
<div class="a " style="left:52.53px;top:31.00px;font-size:11.6px;line-height:15px;letter-spacing:0.483px;color:#1b2d5b;"><u>E</u>dit</div>
<div class="a " style="left:91.69px;top:31.00px;font-size:11.6px;line-height:15px;letter-spacing:0.361px;color:#1b2d5b;"><u>V</u>iew</div>
<div class="a " style="left:135.51px;top:31.00px;font-size:11.6px;line-height:15px;letter-spacing:0.350px;color:#1b2d5b;">Hi<u>s</u>tory</div>
<div class="a " style="left:191.00px;top:31.00px;font-size:11.6px;line-height:15px;letter-spacing:0.449px;color:#1b2d5b;"><u>B</u>ookmarks</div>
<div class="a " style="left:271.31px;top:31.00px;font-size:11.6px;line-height:15px;letter-spacing:0.557px;color:#1b2d5b;"><u>T</u>ools</div>
<div class="a " style="left:318.18px;top:31.00px;font-size:11.6px;line-height:15px;letter-spacing:0.641px;color:#1b2d5b;"><u>H</u>elp</div>
<div class="a " style="left:228.17px;top:62.00px;font-size:11.6px;line-height:15px;letter-spacing:0.473px;color:#1d3a72;">http://192.168.142.128/base/base_main.php</div>
<div class="a " style="left:828.42px;top:62.00px;font-size:11.6px;line-height:15px;letter-spacing:0.347px;color:#a8c4e2;">Google</div>
<div class="a " style="left:32.53px;top:97.00px;font-size:11.6px;line-height:15px;letter-spacing:0.369px;color:#1f4a8a;">Remote-Exploit</div>
<div class="a " style="left:144.20px;top:97.00px;font-size:11.6px;line-height:15px;letter-spacing:-0.055px;color:#1f4a8a;">RE Wiki</div>
<div class="a " style="left:213.23px;top:97.00px;font-size:11.6px;line-height:15px;letter-spacing:0.350px;color:#1f4a8a;">Offensive-Security</div>
<div class="a " style="left:340.95px;top:97.00px;font-size:11.6px;line-height:15px;letter-spacing:0.841px;color:#1f4a8a;">milw0rm</div>
<div class="a " style="left:418.54px;top:97.00px;font-size:11.6px;line-height:15px;letter-spacing:0.448px;color:#1f4a8a;">Metasploit</div>
<div class="a " style="left:503.21px;top:97.00px;font-size:11.6px;line-height:15px;letter-spacing:0.171px;color:#1f4a8a;">SecurityFocus</div>
<div class="a " style="left:607.58px;top:97.00px;font-size:11.6px;line-height:15px;letter-spacing:0.404px;color:#1f4a8a;">[ packet storm ]</div>
<div class="a " style="left:720.39px;top:97.00px;font-size:11.6px;line-height:15px;letter-spacing:0.210px;color:#1f4a8a;">Aircrack-ng</div>
<div class="a " style="left:810.54px;top:97.00px;font-size:11.6px;line-height:15px;letter-spacing:0.231px;color:#1f4a8a;">Back¦Track-fr</div>
<div class="a " style="left:907.97px;top:97.00px;font-size:11.6px;line-height:15px;letter-spacing:0.022px;color:#1f4a8a;">SomaFM</div>
<div class="a " style="left:12.53px;top:708.00px;font-size:11.6px;line-height:15px;letter-spacing:0.417px;color:#1b2d5b;">Done</div>
<div class="a fade" style="left:303.27px;top:742.00px;font-size:11.5px;line-height:15px;letter-spacing:0.861px;color:#000;font-weight:bold;-webkit-text-stroke:0.3px #000;">Basic Analysis and Security</div>
<div class="a " style="left:809.52px;top:742.00px;font-size:11px;line-height:14px;letter-spacing:0.000px;color:#111;">2</div>
<div class="a " style="left:30.74px;top:137.00px;font-size:34.67px;line-height:38px;letter-spacing:0.069px;color:#fff;">Basic Analysis and Security Engine (BASE)</div>
<div class="a " style="left:27.51px;top:194.00px;font-size:13px;line-height:16px;letter-spacing:0.000px;color:#fff;">-</div>
<div class="a " style="left:37.34px;top:194.00px;font-size:13px;line-height:16px;letter-spacing:0.533px;color:#fff;">Today&#x27;s alerts:</div>
<div class="a " style="left:27.51px;top:214.00px;font-size:13px;line-height:16px;letter-spacing:0.000px;color:#fff;">-</div>
<div class="a " style="left:36.96px;top:214.00px;font-size:13px;line-height:16px;letter-spacing:0.205px;color:#fff;">Last 24 Hours alerts:</div>
<div class="a " style="left:27.51px;top:234.00px;font-size:13px;line-height:16px;letter-spacing:0.000px;color:#fff;">-</div>
<div class="a " style="left:36.96px;top:234.00px;font-size:13px;line-height:16px;letter-spacing:0.205px;color:#fff;">Last 72 Hours alerts:</div>
<div class="a " style="left:27.51px;top:254.00px;font-size:13px;line-height:16px;letter-spacing:0.000px;color:#fff;">-</div>
<div class="a " style="left:36.96px;top:254.00px;font-size:13px;line-height:16px;letter-spacing:0.242px;color:#fff;">Most recent 15 Alerts:</div>
<div class="a " style="left:27.51px;top:274.00px;font-size:13px;line-height:16px;letter-spacing:0.000px;color:#fff;">-</div>
<div class="a " style="left:36.96px;top:274.00px;font-size:13px;line-height:16px;letter-spacing:0.241px;color:#fff;">Last Source Ports:</div>
<div class="a " style="left:27.51px;top:294.00px;font-size:13px;line-height:16px;letter-spacing:0.000px;color:#fff;">-</div>
<div class="a " style="left:36.96px;top:294.00px;font-size:13px;line-height:16px;letter-spacing:0.137px;color:#fff;">Last Destination Ports:</div>
<div class="a " style="left:27.51px;top:314.00px;font-size:13px;line-height:16px;letter-spacing:0.000px;color:#fff;">-</div>
<div class="a " style="left:36.96px;top:314.00px;font-size:13px;line-height:16px;letter-spacing:0.196px;color:#fff;">Most Frequent Source Ports:</div>
<div class="a " style="left:27.51px;top:334.00px;font-size:13px;line-height:16px;letter-spacing:0.000px;color:#fff;">-</div>
<div class="a " style="left:36.96px;top:334.00px;font-size:13px;line-height:16px;letter-spacing:0.137px;color:#fff;">Most Frequent Destination</div>
<div class="a " style="left:26.57px;top:350.00px;font-size:13px;line-height:16px;letter-spacing:0.168px;color:#fff;">Ports:</div>
<div class="a " style="left:27.51px;top:370.00px;font-size:13px;line-height:16px;letter-spacing:0.000px;color:#fff;">-</div>
<div class="a " style="left:36.96px;top:370.00px;font-size:13px;line-height:16px;letter-spacing:0.308px;color:#fff;">Most frequent 15 Addresses:</div>
<div class="a " style="left:27.51px;top:390.00px;font-size:13px;line-height:16px;letter-spacing:0.000px;color:#fff;">- </div>
<div class="a " style="left:36.87px;top:390.00px;font-size:13px;line-height:16px;letter-spacing:0.551px;color:#fff;font-weight:bold;">Most recent 15 Unique Alerts</div>
<div class="a " style="left:27.51px;top:410.00px;font-size:13px;line-height:16px;letter-spacing:0.000px;color:#fff;">- </div>
<div class="a " style="left:36.87px;top:410.00px;font-size:13px;line-height:16px;letter-spacing:0.611px;color:#fff;font-weight:bold;">Most frequent 5 Unique Alerts</div>
<div class="a " style="left:249.68px;top:194.00px;font-size:13px;line-height:16px;letter-spacing:0.418px;color:#fff;font-weight:bold;">unique</div>
<div class="a " style="left:337.64px;top:194.00px;font-size:13px;line-height:16px;letter-spacing:0.844px;color:#fff;font-weight:bold;">listing</div>
<div class="a " style="left:403.69px;top:194.00px;font-size:13px;line-height:16px;letter-spacing:0.452px;color:#fff;font-weight:bold;">Source IP</div>
<div class="a " style="left:471.34px;top:194.00px;font-size:13px;line-height:16px;letter-spacing:0.581px;color:#fff;font-weight:bold;">Destination IP</div>
<div class="a " style="left:249.68px;top:214.00px;font-size:13px;line-height:16px;letter-spacing:0.418px;color:#fff;font-weight:bold;">unique</div>
<div class="a " style="left:337.64px;top:214.00px;font-size:13px;line-height:16px;letter-spacing:0.844px;color:#fff;font-weight:bold;">listing</div>
<div class="a " style="left:403.69px;top:214.00px;font-size:13px;line-height:16px;letter-spacing:0.452px;color:#fff;font-weight:bold;">Source IP</div>
<div class="a " style="left:471.34px;top:214.00px;font-size:13px;line-height:16px;letter-spacing:0.581px;color:#fff;font-weight:bold;">Destination IP</div>
<div class="a " style="left:249.68px;top:234.00px;font-size:13px;line-height:16px;letter-spacing:0.418px;color:#fff;font-weight:bold;">unique</div>
<div class="a " style="left:337.64px;top:234.00px;font-size:13px;line-height:16px;letter-spacing:0.844px;color:#fff;font-weight:bold;">listing</div>
<div class="a " style="left:403.69px;top:234.00px;font-size:13px;line-height:16px;letter-spacing:0.452px;color:#fff;font-weight:bold;">Source IP</div>
<div class="a " style="left:471.34px;top:234.00px;font-size:13px;line-height:16px;letter-spacing:0.581px;color:#fff;font-weight:bold;">Destination IP</div>
<div class="a " style="left:230.46px;top:254.00px;font-size:13px;line-height:16px;letter-spacing:0.711px;color:#fff;font-weight:bold;">any protocol</div>
<div class="a " style="left:346.34px;top:254.00px;font-size:13px;line-height:16px;letter-spacing:0.089px;color:#fff;font-weight:bold;">TCP</div>
<div class="a " style="left:420.96px;top:254.00px;font-size:13px;line-height:16px;letter-spacing:-0.336px;color:#fff;font-weight:bold;">UDP</div>
<div class="a " style="left:230.46px;top:274.00px;font-size:13px;line-height:16px;letter-spacing:0.711px;color:#fff;font-weight:bold;">any protocol</div>
<div class="a " style="left:346.34px;top:274.00px;font-size:13px;line-height:16px;letter-spacing:0.089px;color:#fff;font-weight:bold;">TCP</div>
<div class="a " style="left:420.96px;top:274.00px;font-size:13px;line-height:16px;letter-spacing:-0.336px;color:#fff;font-weight:bold;">UDP</div>
<div class="a " style="left:230.46px;top:294.00px;font-size:13px;line-height:16px;letter-spacing:0.711px;color:#fff;font-weight:bold;">any protocol</div>
<div class="a " style="left:346.34px;top:294.00px;font-size:13px;line-height:16px;letter-spacing:0.089px;color:#fff;font-weight:bold;">TCP</div>
<div class="a " style="left:420.96px;top:294.00px;font-size:13px;line-height:16px;letter-spacing:-0.336px;color:#fff;font-weight:bold;">UDP</div>
<div class="a " style="left:230.46px;top:314.00px;font-size:13px;line-height:16px;letter-spacing:0.711px;color:#fff;font-weight:bold;">any protocol</div>
<div class="a " style="left:346.34px;top:314.00px;font-size:13px;line-height:16px;letter-spacing:0.089px;color:#fff;font-weight:bold;">TCP</div>
<div class="a " style="left:420.96px;top:314.00px;font-size:13px;line-height:16px;letter-spacing:-0.336px;color:#fff;font-weight:bold;">UDP</div>
<div class="a " style="left:230.46px;top:342.00px;font-size:13px;line-height:16px;letter-spacing:0.711px;color:#fff;font-weight:bold;">any protocol</div>
<div class="a " style="left:346.34px;top:342.00px;font-size:13px;line-height:16px;letter-spacing:0.089px;color:#fff;font-weight:bold;">TCP</div>
<div class="a " style="left:420.96px;top:342.00px;font-size:13px;line-height:16px;letter-spacing:-0.336px;color:#fff;font-weight:bold;">UDP</div>
<div class="a " style="left:502.00px;top:254.00px;font-size:13px;line-height:16px;letter-spacing:0.003px;color:#fff;font-weight:bold;">ICMP</div>
<div class="a " style="left:249.08px;top:370.00px;font-size:13px;line-height:16px;letter-spacing:0.483px;color:#fff;font-weight:bold;">Source</div>
<div class="a " style="left:319.87px;top:370.00px;font-size:13px;line-height:16px;letter-spacing:0.818px;color:#fff;font-weight:bold;">Destination</div>
<div class="a " style="left:770.11px;top:191.00px;font-size:13px;line-height:16px;letter-spacing:0.336px;color:#e6ff00;">Added 37 alert(s) to the Alert cache</div>
<div class="a " style="left:744.56px;top:206.00px;font-size:11px;line-height:14px;letter-spacing:0.453px;color:#fff;font-weight:bold;">Queried on</div>
<div class="a " style="left:811.31px;top:206.00px;font-size:11px;line-height:14px;letter-spacing:0.440px;color:#fff;">: Mon October 06, 2008 03:02:21</div>
<div class="a " style="left:691.32px;top:219.00px;font-size:11px;line-height:14px;letter-spacing:0.724px;color:#fff;font-weight:bold;">Database:</div>
<div class="a " style="left:753.35px;top:219.00px;font-size:11px;line-height:14px;letter-spacing:0.728px;color:#fff;">snort@localhost</div>
<div class="a " style="left:855.49px;top:219.00px;font-size:11px;line-height:14px;letter-spacing:0.000px;color:#fff;">(</div>
<div class="a " style="left:858.90px;top:219.00px;font-size:11px;line-height:14px;letter-spacing:0.568px;color:#fff;font-weight:bold;">Schema Version:</div>
<div class="a " style="left:958.71px;top:219.00px;font-size:11px;line-height:14px;letter-spacing:0.732px;color:#fff;">107)</div>
<div class="a " style="left:653.52px;top:232.00px;font-size:11px;line-height:14px;letter-spacing:0.339px;color:#fff;font-weight:bold;">Time Window:</div>
<div class="a " style="left:734.71px;top:232.00px;font-size:11px;line-height:14px;letter-spacing:0.562px;color:#fff;">[2008-10-06 03:00:58] - [2008-10-06 03:02:19]</div>
<div class="a " style="left:763.31px;top:314.00px;font-size:13px;line-height:16px;letter-spacing:0.379px;color:#1010e8;font-weight:bold;">Search</div>
<div class="a " style="left:729.58px;top:330.00px;font-size:13px;line-height:16px;letter-spacing:0.564px;color:#1010e8;font-weight:bold;">Graph Alert Data</div>
<div class="a " style="left:693.97px;top:346.00px;font-size:13px;line-height:16px;letter-spacing:0.629px;color:#1010e8;font-weight:bold;">Graph Alert Detection Time</div>
<div class="a " style="left:18.31px;top:456.00px;font-size:13px;line-height:16px;letter-spacing:0.748px;color:#000;font-weight:bold;">Sensors/Total:</div>
<div class="a " style="left:121.00px;top:456.00px;font-size:13px;line-height:16px;letter-spacing:0.000px;color:#1010e8;font-weight:bold;">1</div>
<div class="a " style="left:131.62px;top:456.00px;font-size:13px;line-height:16px;letter-spacing:0.764px;color:#000;">/ 3</div>
<div class="a " style="left:18.23px;top:472.00px;font-size:13px;line-height:16px;letter-spacing:0.447px;color:#000;font-weight:bold;">Unique Alerts:</div>
<div class="a " style="left:116.82px;top:472.00px;font-size:13px;line-height:16px;letter-spacing:0.000px;color:#1010e8;font-weight:bold;">4</div>
<div class="a " style="left:18.35px;top:488.00px;font-size:13px;line-height:16px;letter-spacing:0.768px;color:#000;font-weight:bold;">Categories:</div>
<div class="a " style="left:101.61px;top:488.00px;font-size:13px;line-height:16px;letter-spacing:0.000px;color:#1010e8;font-weight:bold;">2</div>
<div class="a " style="left:18.39px;top:504.00px;font-size:13px;line-height:16px;letter-spacing:0.716px;color:#000;font-weight:bold;">Total Number of Alerts:</div>
<div class="a " style="left:181.51px;top:504.00px;font-size:13px;line-height:16px;letter-spacing:-1.305px;color:#1010e8;font-weight:bold;">91</div>
<div class="a " style="left:57.90px;top:534.00px;font-size:13px;line-height:16px;letter-spacing:0.351px;color:#000;">Src IP addrs:</div>
<div class="a " style="left:140.20px;top:534.00px;font-size:13px;line-height:16px;letter-spacing:0.000px;color:#1010e8;font-weight:bold;">2</div>
<div class="a " style="left:57.45px;top:550.00px;font-size:13px;line-height:16px;letter-spacing:0.203px;color:#000;">Dest. IP addrs:</div>
<div class="a " style="left:149.38px;top:550.00px;font-size:13px;line-height:16px;letter-spacing:0.000px;color:#1010e8;font-weight:bold;">3</div>
<div class="a " style="left:58.46px;top:566.00px;font-size:13px;line-height:16px;letter-spacing:0.182px;color:#000;">Unique IP links</div>
<div class="a " style="left:150.38px;top:566.00px;font-size:13px;line-height:16px;letter-spacing:0.000px;color:#1010e8;font-weight:bold;">3</div>
<div class="a " style="left:57.90px;top:595.00px;font-size:13px;line-height:16px;letter-spacing:0.261px;color:#000;">Source Ports:</div>
<div class="a " style="left:143.35px;top:595.00px;font-size:13px;line-height:16px;letter-spacing:0.000px;color:#1010e8;font-weight:bold;">0</div>
<div class="a " style="left:57.45px;top:654.00px;font-size:13px;line-height:16px;letter-spacing:0.165px;color:#000;">Dest Ports:</div>
<div class="a " style="left:127.10px;top:654.00px;font-size:13px;line-height:16px;letter-spacing:0.000px;color:#1010e8;font-weight:bold;">0</div>
<div class="a " style="left:99.22px;top:638.00px;font-size:13px;line-height:16px;letter-spacing:0.190px;color:#000;">TCP (</div>
<div class="a " style="left:138.35px;top:638.00px;font-size:13px;line-height:16px;letter-spacing:0.000px;color:#1010e8;font-weight:bold;">0</div>
<div class="a " style="left:146.90px;top:638.00px;font-size:13px;line-height:16px;letter-spacing:0.000px;color:#000;">)</div>
<div class="a " style="left:158.13px;top:638.00px;font-size:13px;line-height:16px;letter-spacing:0.290px;color:#000;">UDP (</div>
<div class="a " style="left:198.59px;top:638.00px;font-size:13px;line-height:16px;letter-spacing:0.000px;color:#1010e8;font-weight:bold;">0</div>
<div class="a " style="left:206.90px;top:638.00px;font-size:13px;line-height:16px;letter-spacing:0.000px;color:#000;">)</div>
<div class="a " style="left:99.22px;top:683.00px;font-size:13px;line-height:16px;letter-spacing:0.190px;color:#000;">TCP (</div>
<div class="a " style="left:138.35px;top:683.00px;font-size:13px;line-height:16px;letter-spacing:0.000px;color:#1010e8;font-weight:bold;">0</div>
<div class="a " style="left:146.90px;top:683.00px;font-size:13px;line-height:16px;letter-spacing:0.000px;color:#000;">)</div>
<div class="a " style="left:158.13px;top:683.00px;font-size:13px;line-height:16px;letter-spacing:0.290px;color:#000;">UDP (</div>
<div class="a " style="left:198.59px;top:683.00px;font-size:13px;line-height:16px;letter-spacing:0.000px;color:#1010e8;font-weight:bold;">0</div>
<div class="a " style="left:206.90px;top:683.00px;font-size:13px;line-height:16px;letter-spacing:0.000px;color:#000;">)</div>
<div class="a " style="left:312.85px;top:456.00px;font-size:13px;line-height:16px;letter-spacing:0.736px;color:#000;font-weight:bold;">Traffic Profile by Protocol</div>
<div class="a " style="left:316.35px;top:475.00px;font-size:13px;line-height:16px;letter-spacing:0.628px;color:#000;">TCP</div>
<div class="a " style="left:346.75px;top:475.00px;font-size:13px;line-height:16px;letter-spacing:0.716px;color:#1010e8;font-weight:bold;">(0%)</div>
<div class="a " style="left:315.21px;top:517.00px;font-size:13px;line-height:16px;letter-spacing:-0.060px;color:#000;">UDP</div>
<div class="a " style="left:346.00px;top:517.00px;font-size:13px;line-height:16px;letter-spacing:0.574px;color:#1010e8;font-weight:bold;">(0%)</div>
<div class="a " style="left:315.33px;top:559.00px;font-size:13px;line-height:16px;letter-spacing:0.038px;color:#000;">ICMP</div>
<div class="a " style="left:352.43px;top:559.00px;font-size:13px;line-height:16px;letter-spacing:0.344px;color:#1010e8;font-weight:bold;">(95%)</div>
<div class="a " style="left:315.20px;top:617.00px;font-size:13px;line-height:16px;letter-spacing:0.243px;color:#000;">Portscan Traffic</div>
<div class="a " style="left:414.12px;top:617.00px;font-size:13px;line-height:16px;letter-spacing:0.428px;color:#1010e8;font-weight:bold;">(5%)</div>
</body>
</html>
